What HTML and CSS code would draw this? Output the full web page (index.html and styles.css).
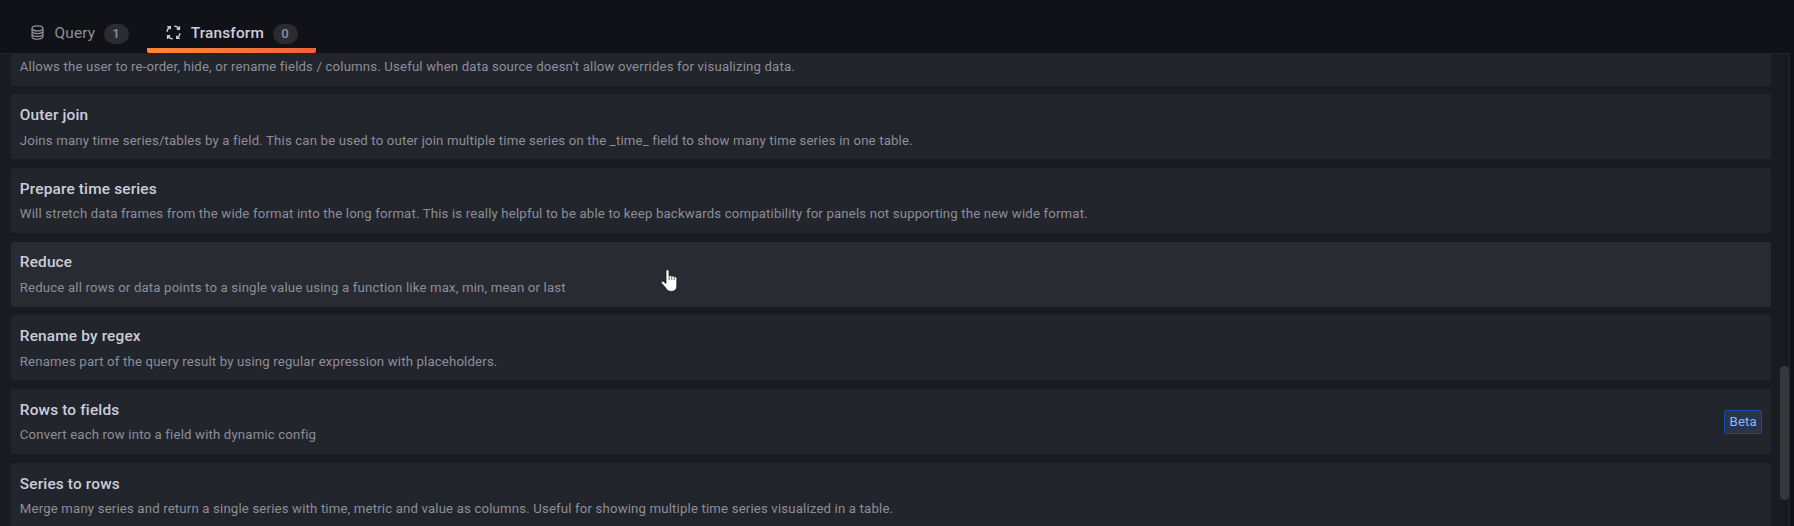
FILE: index.html
```html
<!DOCTYPE html>
<html lang="en">
<head>
<meta charset="utf-8">
<title>Transform</title>
<link rel="stylesheet" href="styles.css">
</head>
<body>
<div class="editor">
  <nav class="tabs">
    <a class="tab">
      <svg class="icon icon-db" viewBox="0 0 16 16" fill="none" stroke="currentColor" stroke-width="1.35"><ellipse cx="8" cy="3.6" rx="5.8" ry="2.6"/><path d="M2.200 3.600v8.800c0 1.400 2.600 2.600 5.800 2.600s5.800-1.200 5.800-2.600V3.600M2.200 6.500c0 1.400 2.600 2.600 5.800 2.600s5.800-1.200 5.800-2.600M2.200 9.500c0 1.400 2.600 2.600 5.800 2.600s5.800-1.200 5.800-2.600"/></svg>
      <span>Query</span><span class="count">1</span>
    </a>
    <a class="tab active">
      <svg class="icon icon-process" viewBox="0 0 16 16" fill="none" stroke="currentColor" stroke-width="1.5"><path d="M1.200 1.700h3.400v2.800M4.300 2.200Q1.200 4 1.200 7.200M14.300 1.200v3.400h-2.800M13.800 4.300Q12 1.200 8.800 1.200M14.800 14.300h-3.400v-2.800M11.700 13.800Q14.800 12 14.800 8.800M1.700 14.800v-3.400h2.800M2.200 11.700Q4 14.800 7.200 14.800"/></svg>
      <span>Transform</span><span class="count">0</span>
    </a>
  </nav>
  <main class="content">
    <div class="list">
      <section class="card clipped"><p>Allows the user to re-order, hide, or rename fields / columns. Useful when data source doesn't allow overrides for visualizing data.</p></section>
      <section class="card"><h2>Outer join</h2><p>Joins many time series/tables by a field. This can be used to outer join multiple time series on the _time_ field to show many time series in one table.</p></section>
      <section class="card"><h2>Prepare time series</h2><p>Will stretch data frames from the wide format into the long format. This is really helpful to be able to keep backwards compatibility for panels not supporting the new wide format.</p></section>
      <section class="card hover"><h2>Reduce</h2><p>Reduce all rows or data points to a single value using a function like max, min, mean or last</p></section>
      <section class="card"><h2>Rename by regex</h2><p>Renames part of the query result by using regular expression with placeholders.</p></section>
      <section class="card with-badge"><div><h2>Rows to fields</h2><p>Convert each row into a field with dynamic config</p></div><span class="badge">Beta</span></section>
      <section class="card"><h2>Series to rows</h2><p>Merge many series and return a single series with time, metric and value as columns. Useful for showing multiple time series visualized in a table.</p></section>
    </div>
    <div class="thumb"></div>
  </main>
</div>
<svg class="cursor" viewBox="0 0 18 24"><path d="M5 2.200C5 .4 8 .4 8 2.200V7c.5-.9 2.400-.7 2.600.4.700-.8 2.300-.5 2.500.6.900-.7 2.700-.2 2.700 1.400V17c0 3.200-2 5.400-5.600 5.400-3 0-4.300-1.400-5.600-3.600L.6 14.200c-1-1.700.9-2.700 2.100-1.600L5 14.500z" fill="#fff" stroke="#111217" stroke-width=".7"/><path d="M8.200 7v4M10.800 7.800V11M13.300 8.500V11" stroke="#22252b" stroke-width=".7"/></svg>
</body>
</html>
```
FILE: styles.css
```css
* { box-sizing: border-box; }
body {
  margin: 0;
  height: 526px;
  overflow: hidden;
  background: #111217;
  color: #ccccdc;
  font-family: Roboto, "Liberation Sans", sans-serif;
  font-size: 15.4px;
  line-height: 23.1px;
  letter-spacing: 0.165px;
}
.editor { display: flex; flex-direction: column; height: 526px; width: 1790px; }
.tabs { display: flex; height: 53px; flex: none; padding: 13px 0 0 13px; }
.tab {
  display: flex;
  align-items: center;
  height: 40px;
  padding: 1px 18px 0 17px;
  color: #8e8e9a;
}
.tab.active {
  color: #ccccdc;
  font-weight: 500;
  background: linear-gradient(270deg, #f55f3e 0%, #ff8833 100%) 0 100% / 100% 5px no-repeat;
  border-radius: 2px;
}
.icon { width: 15px; height: 15px; margin-right: 9.5px; }
.icon-db { margin-top: -2px; }
.icon-process { margin: -2px 10px 0 2px; }
.count {
  min-width: 25px;
  height: 20px;
  margin-left: 8.5px;
  border-radius: 10px;
  background: #2b2c31;
  color: #8e8e9a;
  font-size: 13.2px;
  line-height: 20px;
  font-weight: 500;
  text-align: center;
}
.content {
  display: flex;
  justify-content: space-between;
  flex: 1;
  min-height: 0;
  overflow: hidden;
  background: #181b1f;
  border-top: 1px solid #222428;
  border-right: 1px solid #25272b;
}
.list { display: flex; flex-direction: column; gap: 8.72px; width: 1771px; padding-left: 11px; }
.card {
  flex: none;
  height: 65px;
  padding: 9.75px 8.8px 7.85px;
  border-radius: 2px;
  background: #22252b;
}
.card.hover { background: #282b31; }
.card.clipped { height: 31.58px; padding-top: 2.9px; border-radius: 0 0 2px 2px; }
.with-badge { display: flex; justify-content: space-between; align-items: flex-start; }
h2 { margin: 0 0 3.45px; font-size: 15.4px; line-height: 23.1px; font-weight: 500; }
p { margin: 0; font-size: 13.2px; line-height: 19.8px; color: #8e8e9a; }
.badge {
  align-self: center;
  width: 38px;
  height: 24px;
  margin-bottom: 2px;
  border: 1px solid #164ca6;
  border-radius: 2px;
  background: #29344a;
  color: #8ab8ff;
  font-size: 13.2px;
  line-height: 22px;
  text-align: center;
}
.thumb { width: 9px; height: 134px; margin-top: 312px; border-radius: 5px; background: #36383c; }
.cursor { position: absolute; left: 661px; top: 269px; width: 18px; height: 24px; }
```
